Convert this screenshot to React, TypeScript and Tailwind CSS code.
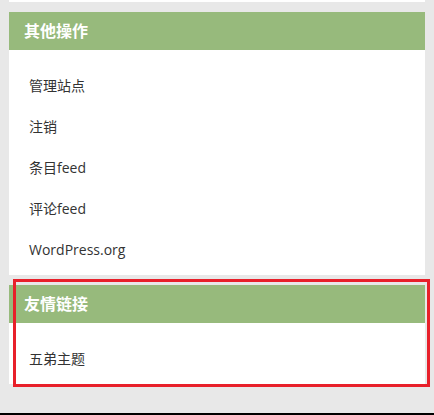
import React from 'react';

const font = { fontFamily: '"Open Sans", "Noto Sans CJK SC", sans-serif' };

interface WidgetProps {
    title: string;
    links: string[];
}

function Widget({ title, links }: WidgetProps) {
    return (
        <div className="mx-[9px] mt-[10px] bg-white">
            <h3 className="h-[38px] bg-[#97ba7c] pl-[15px] text-[16px] font-bold leading-[38px] text-white">{title}</h3>
            <ul className="pt-[15px] pb-[5px] pl-[20px]">
                {links.map(link => (
                    <li key={link} className="h-[41px] text-[14px] leading-[41px] text-[#333]">
                        {link}
                    </li>
                ))}
            </ul>
        </div>
    );
}

export default function App() {
    return (
        <div className="relative h-[415px] w-[434px] overflow-hidden bg-[#e8e8e8]" style={font}>
            <div className="mx-[9px] h-[2px] bg-white" />
            <Widget title="其他操作" links={['管理站点', '注销', '条目feed', '评论feed', 'WordPress.org']} />
            <Widget title="友情链接" links={['五弟主题']} />

            {/* highlight box */}
            <div className="absolute left-[13px] top-[279px] h-[108px] w-[417px] border-[3px] border-[#e8202a]" />
            <div className="absolute bottom-0 left-0 h-[2px] w-full bg-black" />
        </div>
    );
}
